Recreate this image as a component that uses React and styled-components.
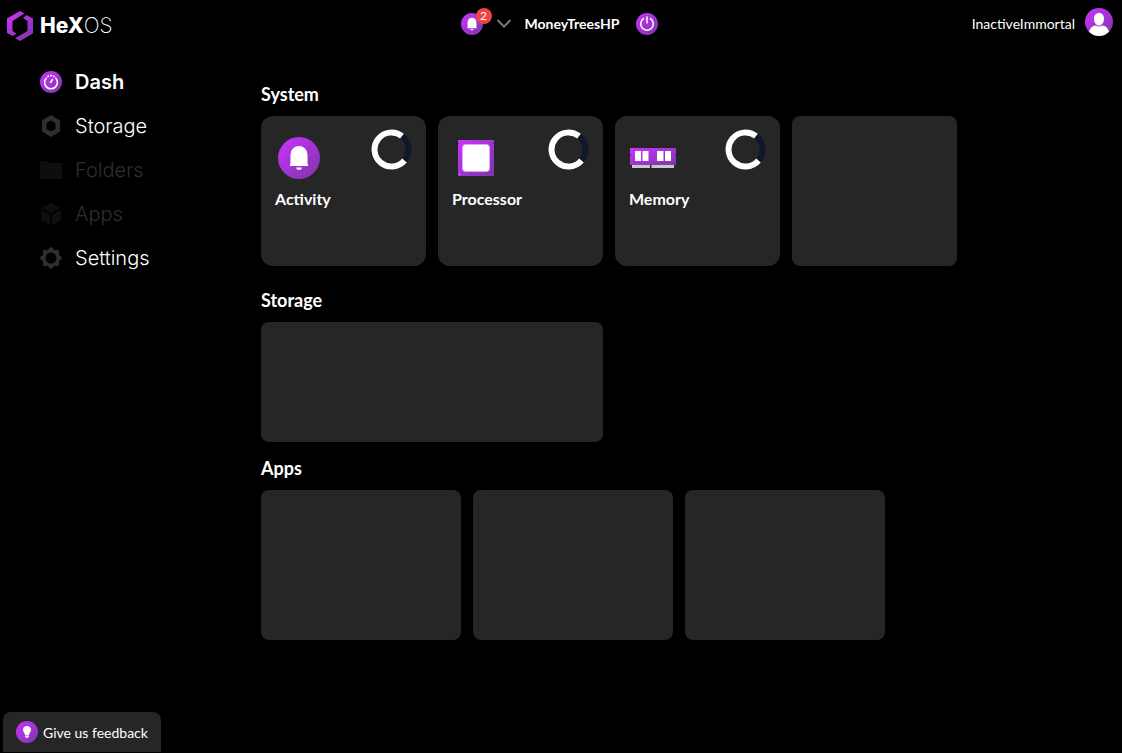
import styled, { createGlobalStyle, ThemeProvider } from "styled-components";

const theme = {
    colors: {
        background: "#000000",
        panel: "#262626",
        text: "#ffffff",
        muted: "#2e2e2e",
        badge: "#ef4444",
        track: "#0f172a",
    },
};

const GlobalStyle = createGlobalStyle`
    * {
        box-sizing: border-box;
    }

    body {
        margin: 0;
        background-color: ${props => props.theme.colors.background};
        color: ${props => props.theme.colors.text};
        font-family: Lato, "Liberation Sans", sans-serif;
        font-size: 14px;
    }

    button {
        padding: 0;
        border: none;
        background: none;
        color: inherit;
        font: inherit;
        cursor: pointer;
    }

    svg {
        display: block;
        flex-shrink: 0;
    }
`;

const Page = styled.div`
    min-height: 100vh;
`;

const HeaderBar = styled.header`
    display: grid;
    grid-template-columns: 1fr auto 1fr;
    align-items: center;
    height: 48px;
    padding: 0 9px 0 6px;
`;

const Logo = styled.a`
    display: flex;
    align-items: center;
    gap: 6px;
    padding-top: 4px;
    color: inherit;
    text-decoration: none;
`;

const LogoText = styled.span`
    font-family: Inter, sans-serif;
    font-size: 21px;
    line-height: 24px;
    font-weight: 200;
`;

const LogoBold = styled.span`
    font-weight: 800;
`;

const ServerBar = styled.div`
    display: flex;
    align-items: center;
`;

const AlertButton = styled.button`
    position: relative;
    margin-right: 14px;
`;

const Badge = styled.span`
    position: absolute;
    top: -5px;
    right: -9px;
    width: 16px;
    height: 16px;
    border-radius: 50%;
    background-color: ${props => props.theme.colors.badge};
    font-size: 12px;
    line-height: 16px;
    text-align: center;
`;

const ServerName = styled.span`
    margin: 0 17px 0 14px;
    font-weight: 700;
    line-height: 20px;
`;

const UserButton = styled.button`
    display: flex;
    align-items: center;
    justify-self: end;
    gap: 10px;
    padding-bottom: 4px;
`;

const UserName = styled.span`
    padding-top: 4px;
    line-height: 20px;
`;

const Body = styled.div`
    display: grid;
    grid-template-columns: 221px 1fr;
    gap: 40px;
`;

const Sidebar = styled.nav`
    display: flex;
    flex-direction: column;
    gap: 16px;
    padding: 20px 0 0 40px;
`;

const NavItem = styled.a`
    display: flex;
    align-items: center;
    gap: 13px;
    color: ${props => (props.$disabled ? props.theme.colors.muted : props.theme.colors.text)};
    font-family: Inter, sans-serif;
    font-size: 20px;
    font-weight: ${props => (props.$active ? 600 : 300)};
    line-height: 28px;
    text-decoration: none;
`;

const Main = styled.main`
    padding: 34px 16px 100px 0;
`;

const Section = styled.section`
    margin-bottom: ${props => (props.$spaced ? 22 : 14)}px;
`;

const SectionTitle = styled.h2`
    margin: 0 0 10px;
    font-size: 18px;
    font-weight: 700;
    line-height: 24px;
`;

const CardRow = styled.div`
    display: flex;
    flex-wrap: wrap;
    gap: 12px;
`;

const Placeholder = styled.div`
    width: ${props => props.$width}px;
    height: ${props => props.$height}px;
    border-radius: 8px;
    background-color: ${props => props.theme.colors.panel};
`;

const Card = styled.article`
    width: 165px;
    height: 150px;
    padding: 13px 14px;
    border-radius: 12px;
    background-color: ${props => props.theme.colors.panel};
`;

const CardTop = styled.div`
    display: flex;
    justify-content: space-between;
    height: 58px;
`;

const CardIcon = styled.div`
    display: flex;
    align-items: center;
    justify-content: center;
    width: 48px;
    height: 58px;
`;

const CardTitle = styled.h3`
    margin: 0;
    font-size: 16px;
    font-weight: 700;
    line-height: 24px;
`;

const FeedbackButton = styled.button`
    && {
        position: fixed;
        bottom: 1px;
        left: 3px;
        display: flex;
        align-items: center;
        gap: 5px;
        height: 40px;
        padding: 0 13px;
        border-radius: 8px 8px 0 0;
        background-color: ${props => props.theme.colors.panel};
    }
`;

const Gradients = () => (
    <svg width="0" height="0" style={{ position: "absolute" }} aria-hidden="true">
        <defs>
            <linearGradient id="purple" x1="0" y1="0" x2="1" y2="1">
                <stop offset="0" stopColor="#cc33ff" />
                <stop offset="1" stopColor="#7c35a8" />
            </linearGradient>
        </defs>
    </svg>
);

const LogoMark = () => (
    <svg width="28" height="30" viewBox="0 0 28 30">
        <defs>
            <linearGradient id="logo" gradientUnits="userSpaceOnUse" x1="2" y1="2" x2="26" y2="28">
                <stop offset="0" stopColor="#cc33ff" />
                <stop offset="1" stopColor="#7c35a8" />
            </linearGradient>
        </defs>
        <g fill="url(#logo)">
            <path d="M14 0 18.500 2.500 6.500 10V20L10.500 22.500 7 25 1 22V7.500Z" />
            <path d="M20.500 4 27 7.500V22.500L14 30 9 27.200 21.500 20V10L17 7Z" />
        </g>
    </svg>
);

const BellIcon = ({ size }) => (
    <svg width={size} height={size} viewBox="0 0 42 42">
        <circle cx="21" cy="21" r="21" fill="url(#purple)" />
        <path fill="#fff" d="M12.500 27V17.500a8.500 8.500 0 0 1 17 0V27h.5v2H12v-2ZM18 30.500h6q-.5 2.500-3 2.500t-3-2.500Z" />
    </svg>
);

const ChevronIcon = () => (
    <svg width="14" height="10" viewBox="0 0 14 10" fill="none" stroke="#777" strokeWidth="2" strokeLinecap="round">
        <path d="m1 1.500 6 6 6-6" />
    </svg>
);

const PowerIcon = () => (
    <svg width="22" height="22" viewBox="0 0 22 22">
        <circle cx="11" cy="11" r="11" fill="url(#purple)" />
        <path d="M7.500 5.700a6.300 6.300 0 1 0 7 0M11 4v6" fill="none" stroke="#fff" strokeWidth="1.500" strokeLinecap="round" />
    </svg>
);

const AvatarIcon = () => (
    <svg width="28" height="28" viewBox="0 0 28 28">
        <circle cx="14" cy="14" r="14" fill="url(#purple)" />
        <path fill="#fff" d="M14 5c3 0 5 2.300 5 5.700S17 17.500 14 17.500s-5-3.400-5-6.800S11 5 14 5ZM4 23.700c1-3.700 3.500-6 6.500-6.200q3.500 2 7 0c3 .2 5.500 2.500 6.500 6.200a14 14 0 0 1-20 0Z" />
    </svg>
);

const DashIcon = () => (
    <svg width="22" height="22" viewBox="0 0 22 22">
        <circle cx="11" cy="11" r="11" fill="url(#purple)" />
        <g fill="none" stroke="#fff" strokeWidth="1.500">
            <path d="M6.700 6.700a6.400 6.400 0 1 0 8.600 0" />
            <path d="M7.300 5.800a6.400 6.400 0 0 1 7.400 0" strokeDasharray="2 1" />
            <path d="m10.500 11.500 2-3" strokeLinecap="round" />
        </g>
    </svg>
);

const StorageIcon = () => (
    <svg width="22" height="22" viewBox="0 0 22 22" fill="#2f2f2f" fillRule="evenodd">
        <path d="M11 0 20 5.500v11L11 22l-9-5.500v-11ZM11 5.500 6.500 8v6l4.500 2.500 4.500-2.500V8Z" />
    </svg>
);

const FolderIcon = () => (
    <svg width="22" height="22" viewBox="0 0 22 22" fill="#0e0e0e">
        <path d="M0 2h7l2 2h13v16H0Z" />
    </svg>
);

const AppsIcon = () => (
    <svg width="22" height="22" viewBox="0 0 22 22" fill="#0e0e0e">
        <path d="m11 0 9.500 5L11 10 1.500 5ZM1 6.500l9 5V22l-9-5ZM21 6.500l-9 5V22l9-5Z" />
    </svg>
);

const GearIcon = () => (
    <svg width="22" height="22" viewBox="0 0 22 22">
        <circle cx="11" cy="11" r="7" fill="none" stroke="#2f2f2f" strokeWidth="3" />
        <g fill="#2f2f2f">
            {[0, 45, 90, 135, 180, 225, 270, 315].map(angle => (
                <path key={angle} d="M7.500 3.500 10 .5q1-.8 2 0l2.500 3Z" transform={`rotate(${angle} 11 11)`} />
            ))}
        </g>
    </svg>
);

const ProcessorIcon = () => (
    <svg width="36" height="36" viewBox="0 0 36 36">
        <rect width="36" height="36" fill="url(#purple)" />
        <rect x="4.500" y="4.500" width="27" height="27" rx="3" fill="#fff" stroke="#dda5f5" />
        <path fill="#5b287b" d="M0 3h1v1H0ZM35 3h1v1h-1Z" />
        <path fill="#e7bafa" d="M1 34h1v1H1Z" />
    </svg>
);

const MemoryIcon = () => (
    <svg width="46" height="20" viewBox="0 0 46 20">
        <path fill="url(#purple)" d="M0 0h46v6l-1 1 1 1v9H0V8l1-1-1-1Z" />
        <path fill="#fff" d="M5 3h6v10H5ZM12.500 3h6v10h-6ZM27 3h6.500v10H27ZM35 3h6v10h-6Z" />
        <path fill="#c5cbc5" d="M2 17h18v3H2ZM21.500 17H44v3H21.500Z" />
    </svg>
);

const Spinner = () => (
    <svg width="41" height="41" viewBox="0 0 41 41" fill="none" strokeWidth="6" role="img" aria-label="Loading">
        <circle cx="20.500" cy="20.500" r="17" stroke={theme.colors.track} />
        <path d="M31 7.100A17 17 0 1 0 33.500 31.500" stroke="#fff" />
    </svg>
);

const BulbIcon = () => (
    <svg width="22" height="22" viewBox="0 0 22 22">
        <circle cx="11" cy="11" r="11" fill="url(#purple)" />
        <path fill="#fff" d="M11 5c2.500 0 4 1.600 4 3.800 0 2-1.500 2.700-2 5.200H9c-.5-2.500-2-3.200-2-5.200C7 6.600 8.500 5 11 5ZM9 14.600h4v1q-.5 1.400-2 1.400t-2-1.400Z" />
    </svg>
);

const navItems = [
    { label: "Dash", Icon: DashIcon, active: true },
    { label: "Storage", Icon: StorageIcon },
    { label: "Folders", Icon: FolderIcon, disabled: true },
    { label: "Apps", Icon: AppsIcon, disabled: true },
    { label: "Settings", Icon: GearIcon },
];

const systemCards = [
    { title: "Activity", icon: <BellIcon size={42} /> },
    { title: "Processor", icon: <ProcessorIcon /> },
    { title: "Memory", icon: <MemoryIcon /> },
];

function Header() {
    return (
        <HeaderBar>
            <Logo href="#">
                <LogoMark />
                <LogoText><LogoBold>HeX</LogoBold>OS</LogoText>
            </Logo>
            <ServerBar>
                <AlertButton aria-label="Notifications">
                    <BellIcon size={22} />
                    <Badge>2</Badge>
                </AlertButton>
                <button aria-label="Choose server"><ChevronIcon /></button>
                <ServerName>MoneyTreesHP</ServerName>
                <button aria-label="Power"><PowerIcon /></button>
            </ServerBar>
            <UserButton>
                <UserName>InactiveImmortal</UserName>
                <AvatarIcon />
            </UserButton>
        </HeaderBar>
    )
}

function App() {
    return (
        <ThemeProvider theme={theme}>
            <GlobalStyle />
            <Gradients />
            <Page>
                <Header />
                <Body>
                    <Sidebar>
                        {navItems.map(({ label, Icon, active, disabled }) => (
                            <NavItem key={label} href="#" $active={active} $disabled={disabled} aria-disabled={disabled}>
                                <Icon />
                                {label}
                            </NavItem>
                        ))}
                    </Sidebar>
                    <Main>
                        <Section $spaced>
                            <SectionTitle>System</SectionTitle>
                            <CardRow>
                                {systemCards.map(({ title, icon }) => (
                                    <Card key={title}>
                                        <CardTop>
                                            <CardIcon>{icon}</CardIcon>
                                            <Spinner />
                                        </CardTop>
                                        <CardTitle>{title}</CardTitle>
                                    </Card>
                                ))}
                                <Placeholder $width={165} $height={150} />
                            </CardRow>
                        </Section>
                        <Section>
                            <SectionTitle>Storage</SectionTitle>
                            <Placeholder $width={342} $height={120} />
                        </Section>
                        <Section>
                            <SectionTitle>Apps</SectionTitle>
                            <CardRow>
                                <Placeholder $width={200} $height={150} />
                                <Placeholder $width={200} $height={150} />
                                <Placeholder $width={200} $height={150} />
                            </CardRow>
                        </Section>
                    </Main>
                </Body>
                <FeedbackButton>
                    <BulbIcon />
                    Give us feedback
                </FeedbackButton>
            </Page>
        </ThemeProvider>
    )
}

export default App;
